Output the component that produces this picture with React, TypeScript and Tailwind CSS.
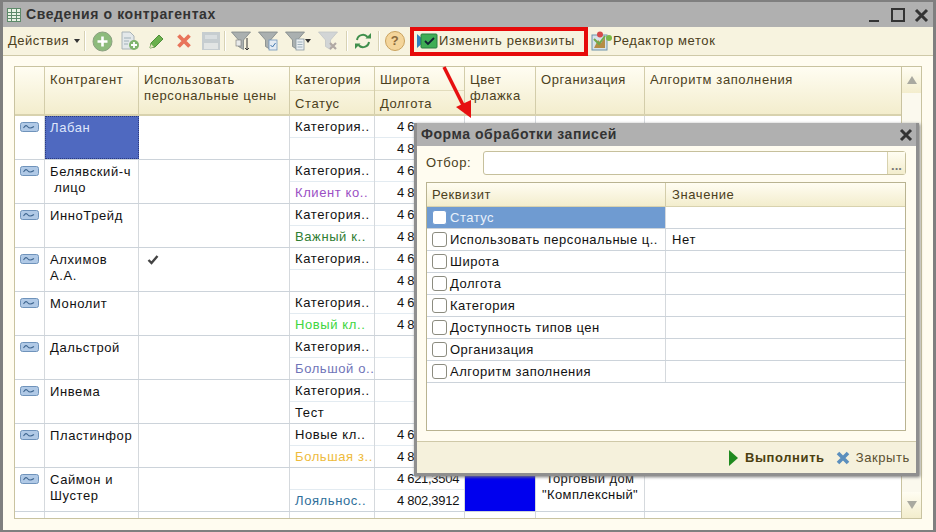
import type { ReactNode } from "react";

const rows = [
  { name: ["Лабан"], selected: true, top: "Категория..", status: "", statusClass: "", lat: "4 6", lon: "4 8" },
  { name: ["Белявский-ч", "\u00a0лицо"], top: "Категория..", status: "Клиент ко..", statusClass: "text-[#9a4fc4]", lat: "4 6", lon: "4 8" },
  { name: ["ИнноТрейд"], top: "Категория..", status: "Важный к..", statusClass: "text-[#2f7d32]", lat: "4 6", lon: "4 8" },
  { name: ["Алхимов", "А.А."], check: true, top: "Категория..", status: "", statusClass: "", lat: "4 6", lon: "4 8" },
  { name: ["Монолит"], top: "Категория..", status: "Новый кл..", statusClass: "text-[#3ed63e]", lat: "4 6", lon: "4 8" },
  { name: ["Дальстрой"], top: "Категория..", status: "Большой о..", statusClass: "text-[#6f74b8]", lat: "", lon: "" },
  { name: ["Инвема"], top: "Категория..", status: "Тест", statusClass: "text-[#111]", lat: "", lon: "" },
  { name: ["Пластинфор"], top: "Новые кл..", status: "Большая з..", statusClass: "text-[#eebb3c]", lat: "4 6", lon: "4 8" },
  { name: ["Саймон и", "Шустер"], top: "", status: "Лояльнос..", statusClass: "text-[#2f6f9a]", lat: "4 621,3504", lon: "4 802,3912", color: true, org: ["Торговый дом", "\"Комплексный\""] },
];

const fields = [
  { label: "Статус", selected: true },
  { label: "Использовать персональные ц..", value: "Нет" },
  { label: "Широта" },
  { label: "Долгота" },
  { label: "Категория" },
  { label: "Доступность типов цен" },
  { label: "Организация" },
  { label: "Алгоритм заполнения" },
];

function Sep() {
  return <div className="mx-0 h-[20px] w-[2px] shrink-0 border-l border-r border-l-[#d8d2b4] border-r-white" />;
}

function Tool({ children, w = "w-[27px]" }: { children: ReactNode; w?: string }) {
  return <div className={`${w} flex h-full shrink-0 items-center justify-center`}>{children}</div>;
}

function Funnel({ dim, children }: { dim?: boolean; children?: ReactNode }) {
  return (
    <svg width="20" height="20" viewBox="0 0 20 20">
      <path d="M0.500 1h19l-7 8v9.500l-5-3V9z" fill={dim ? "#d2d5d6" : "#aab0b0"} stroke={dim ? "#c2c5c6" : "#7d8586"} strokeWidth="0.800" />
      {children}
    </svg>
  );
}

function RowIcon() {
  return (
    <svg width="19" height="10" viewBox="0 0 19 10">
      <rect x="0.500" y="0.500" width="18" height="9" rx="2" fill="#b0c9e6" stroke="#6f93bb" />
      <path d="M3.500 6c2-3 3-3 4.500-1s3 1.500 6-.5" fill="none" stroke="#3f6690" strokeWidth="1.100" />
    </svg>
  );
}

function Toolbar() {
  return (
    <div className="flex h-[29px] shrink-0 items-center border-b border-[#cfc9a8] bg-[#f7f3df] pl-[5px] text-[#4b4020]">
      <span className="w-[66px] shrink-0 tracking-[0.5px]">Действия</span>
      <span className="mr-[4px] h-0 w-0 border-x-[3px] border-t-[4px] border-x-transparent border-t-[#333]" />
      <Sep />
      <div className="w-[3px]" />
      <Tool>
        <svg width="21" height="21" viewBox="0 0 21 21">
          <circle cx="10.500" cy="10.500" r="9.500" fill="#8dbb7c" stroke="#8a9f80" />
          <path d="M10.500 5.500v10M5.500 10.500h10" stroke="#fff" strokeWidth="2.600" />
        </svg>
      </Tool>
      <Tool>
        <svg width="20" height="20" viewBox="0 0 20 20">
          <path d="M2 1h8l4 4v13H2z" fill="#e3e8ea" stroke="#a8b2b6" />
          <path d="M4 7h7M4 10h5M4 13h4" stroke="#9fb0b8" />
          <circle cx="14" cy="14" r="5" fill="#7fb46c" />
          <path d="M14 11v6M11 14h6" stroke="#fff" strokeWidth="1.800" />
        </svg>
      </Tool>
      <Tool>
        <svg width="18" height="18" viewBox="0 0 18 18">
          <path d="M2 16l1-5 8-8 4 4-8 8z" fill="#6ab04c" stroke="#4f8f3a" />
          <path d="M2 16l1-4 3 3z" fill="#e8e4c0" />
        </svg>
      </Tool>
      <Tool>
        <svg width="16" height="16" viewBox="0 0 16 16">
          <path d="M2.500 2.500l11 11M13.500 2.500l-11 11" stroke="#e8745a" strokeWidth="3.800" />
        </svg>
      </Tool>
      <Tool>
        <svg width="20" height="20" viewBox="0 0 20 20">
          <rect x="1" y="1" width="18" height="18" fill="#c6cdd0" />
          <rect x="4" y="4" width="12" height="4" fill="#d9dee0" />
          <rect x="3" y="12" width="14" height="6" fill="#e2e5e4" />
        </svg>
      </Tool>
      <Sep />
      <div className="w-[1px]" />
      <Tool>
        <Funnel>
          <path d="M16 7v12M14 17l2 2 2-2" stroke="#333" fill="none" />
          <rect x="5" y="9" width="5" height="6" fill="#e8eaea" stroke="#777" strokeWidth="0.600" />
        </Funnel>
      </Tool>
      <Tool>
        <Funnel>
          <rect x="11" y="9" width="8" height="10" fill="#e4ebf2" stroke="#6f93bb" strokeWidth="0.800" />
          <path d="M12.500 14l2 2 3-4" stroke="#3f76ad" fill="none" />
        </Funnel>
      </Tool>
      <Tool>
        <Funnel>
          <rect x="11" y="8" width="8" height="11" fill="#e9eef0" stroke="#8c9aa2" strokeWidth="0.800" />
          <path d="M12.500 11h5M12.500 13.500h5M12.500 16h5" stroke="#8ca0ad" strokeWidth="0.800" />
        </Funnel>
      </Tool>
      <span className="ml-[-3px] mr-[6px] h-0 w-0 border-x-[3px] border-t-[4px] border-x-transparent border-t-[#333]" />
      <Tool w="w-[22px]">
        <Funnel dim>
          <path d="M12 12l6 6M18 12l-6 6" stroke="#b0a8a4" strokeWidth="2.200" />
        </Funnel>
      </Tool>
      <div className="w-[7px]" />
      <Sep />
      <Tool w="w-[30px]">
        <svg width="18" height="18" viewBox="0 0 18 18" fill="none">
          <path d="M3 8a6 6 0 0 1 10.500-3" stroke="#3f8f4c" strokeWidth="2" />
          <path d="M15 10a6 6 0 0 1-10.500 3" stroke="#3f8f4c" strokeWidth="2" />
          <path d="M11.500 6.500H17V1z" fill="#3f8f4c" />
          <path d="M6.500 11.500H1V17z" fill="#3f8f4c" />
        </svg>
      </Tool>
      <Sep />
      <Tool w="w-[30px]">
        <div className="flex h-[20px] w-[20px] items-center justify-center rounded-full border border-[#c9a25e] bg-[#f4d59a] text-[13px] font-bold text-[#8a6a3a]">?</div>
      </Tool>
      <div className="w-[1px]" />
      <Sep />
      <div className="flex shrink-0 items-center pl-[4px]">
        <svg width="21" height="16" viewBox="0 0 21 16">
          <path d="M0 1l8 7-8 7z" fill="#2f80c0" />
          <rect x="4" y="1" width="16" height="14" rx="1" fill="#3fae55" stroke="#2a7f40" />
          <path d="M8 8l3 3 6-6" stroke="#123" strokeWidth="1.800" fill="none" />
        </svg>
      </div>
      <span className="ml-[1px] w-[152px] shrink-0">Изменить реквизиты</span>
      <div className="flex shrink-0 items-center">
        <svg width="22" height="20" viewBox="0 0 22 20">
          <rect x="1" y="4" width="15" height="15" fill="#d7e3ea" stroke="#6f93ab" />
          <path d="M3 17l4-8 3 3 4-6v11z" fill="#b58d45" />
          <path d="M3 8l5 5 6-8" stroke="#6faa4c" strokeWidth="2" fill="none" />
          <circle cx="9" cy="3.500" r="3" fill="#d64a4a" />
          <circle cx="18" cy="7" r="3" fill="#7cb845" />
        </svg>
      </div>
      <span className="shrink-0">Редактор меток</span>
    </div>
  );
}

function HeadCell({ className, children }: { className: string; children?: ReactNode }) {
  return <div className={`border-r border-[#d3cdaa] px-[5px] ${className}`}>{children}</div>;
}

function TableHead() {
  return (
    <div className="flex h-[49px] shrink-0 border-b-2 border-[#d8d2ae] bg-linear-to-b from-[#fffdf2] to-[#f3edcd] leading-[16px] text-[#4b4020]">
      <HeadCell className="w-[30px]" />
      <HeadCell className="w-[94px] pt-[5px]">Контрагент</HeadCell>
      <HeadCell className="w-[151px] pt-[5px] whitespace-nowrap">Использовать<br />персональные цены</HeadCell>
      <div className="flex w-[85px] flex-col border-r border-[#d3cdaa]">
        <div className="h-[24px] border-b border-[#e2dcbc] px-[5px] pt-[5px]">Категория</div>
        <div className="px-[5px] pt-[5px]">Статус</div>
      </div>
      <div className="flex w-[90px] flex-col border-r border-[#d3cdaa]">
        <div className="h-[24px] border-b border-[#e2dcbc] px-[5px] pt-[5px]">Широта</div>
        <div className="px-[5px] pt-[5px]">Долгота</div>
      </div>
      <HeadCell className="w-[71px] pt-[5px]">Цвет<br />флажка</HeadCell>
      <HeadCell className="w-[109px] pt-[5px]">Организация</HeadCell>
      <div className="flex-1 px-[5px] pt-[5px]">Алгоритм заполнения</div>
    </div>
  );
}

function TableRow({ row }: { row: (typeof rows)[number] }) {
  return (
    <div className="flex h-[44px] shrink-0 border-b border-[#ccd3da] leading-[16px] text-[#111]">
      <div className="flex w-[30px] justify-center border-r border-[#d5d9dd] pt-[6px]">
        <div className="h-[10px]"><RowIcon /></div>
      </div>
      <div className={`w-[94px] whitespace-nowrap ${row.selected ? "border border-dotted border-[#2a3a80] bg-[#4f69c0] pl-[4px] pt-[3px] text-[#dfe6fb]" : "border-r border-[#d5d9dd] pl-[5px] pt-[4px]"}`}>
        {row.name.map((n) => <div key={n} className="h-[16px] whitespace-pre">{n}</div>)}
      </div>
      <div className="w-[151px] border-r border-[#d5d9dd] pl-[7px] pt-[5px]">
        {row.check && (
          <svg width="12" height="10" viewBox="0 0 12 10" className="ml-[1px] mt-[2px]">
            <path d="M1.500 5l3 3 6-7" fill="none" stroke="#444" strokeWidth="2.400" />
          </svg>
        )}
      </div>
      <div className="flex w-[85px] flex-col whitespace-nowrap border-r border-[#d5d9dd]">
        <div className="h-[22px] border-b border-[#e3ebf1] pl-[5px] pt-[3px]">{row.top}</div>
        <div className={`pl-[5px] pt-[3px] ${row.statusClass}`}>{row.status}</div>
      </div>
      <div className="flex w-[90px] flex-col whitespace-nowrap border-r border-[#d5d9dd] tracking-[-0.3px]">
        <div className="h-[22px] border-b border-[#e3ebf1] pl-[22px] pt-[3px]">{row.lat}</div>
        <div className="pl-[22px] pt-[3px]">{row.lon}</div>
      </div>
      <div className={`w-[71px] border-r border-[#d5d9dd] ${row.color ? "bg-[#0000ee]" : ""}`} />
      <div className="w-[109px] whitespace-nowrap border-r border-[#d5d9dd] pt-[3px] text-center tracking-[0.4px]">
        {row.org?.map((n) => <div key={n} className="h-[16px]">{n}</div>)}
      </div>
      <div className="flex-1" />
    </div>
  );
}

function ScrollArrow({ up }: { up?: boolean }) {
  return (
    <div className="flex h-[26px] items-center justify-center border-[#d8d2ae] bg-linear-to-b from-[#fffdf2] to-[#f3edcd]">
      <span className={`h-0 w-0 border-x-[5px] border-x-transparent ${up ? "border-b-[8px] border-b-[#a9a9a0]" : "border-t-[8px] border-t-[#a9a9a0]"}`} />
    </div>
  );
}

function Dialog() {
  return (
    <div className="absolute left-[414px] top-[123px] flex h-[353px] w-[505px] flex-col border-[3px] border-[#8f8f8f] border-t-0 bg-[#fffcf0] shadow-[1px_1px_3px_#777]">
      <div className="flex h-[23px] shrink-0 items-center justify-between bg-[#b0b0b0] pl-[4px] pr-[3px]">
        <span className="text-[14px] font-bold tracking-[0.55px] text-[#333]">Форма обработки записей</span>
        <svg width="14" height="14" viewBox="0 0 14 14">
          <path d="M2 2l10 10M12 2L2 12" stroke="#333" strokeWidth="3" />
        </svg>
      </div>
      <div className="flex flex-1 flex-col pl-[9px] pr-[10px] pt-[5px]">
        <div className="flex h-[24px] shrink-0 items-center text-[#4b4020]">
          <span className="w-[57px]">Отбор:</span>
          <div className="flex h-[24px] flex-1 justify-end rounded-[3px] border border-[#c6c09c] bg-white">
            <div className="flex w-[18px] items-end justify-center border-l border-[#d8d2ae] bg-linear-to-b from-[#fffdf2] to-[#f3edcd] pb-[3px] text-[13px] font-bold leading-[10px] tracking-normal text-[#777]">...</div>
          </div>
        </div>
        <div className="mt-[7px] flex h-[249px] shrink-0 flex-col border border-[#b9b391] bg-white">
          <div className="flex h-[24px] shrink-0 items-center border-b border-[#d8d2ae] bg-linear-to-b from-[#fffdf2] to-[#f3edcd] text-[#4b4020]">
            <div className="flex h-full w-[239px] items-center border-r border-[#d3cdaa] pl-[5px]">Реквизит</div>
            <div className="pl-[6px]">Значение</div>
          </div>
          {fields.map((f) => (
            <div key={f.label} className="flex h-[22px] shrink-0 items-center border-b border-[#ccd3da] text-[#111]">
              <div className={`flex h-full w-[239px] items-center overflow-hidden border-r border-[#d5d9dd] pl-[5px] ${f.selected ? "bg-[#6f9bd1] text-[#e9f1fb]" : ""}`}>
                <span className={`mr-[3px] h-[15px] w-[15px] shrink-0 rounded-[3px] border ${f.selected ? "border-[#6f9bd1] bg-white" : "border-[#8c8c80] bg-white"}`} />
                <span className="whitespace-nowrap tracking-[0.5px]">{f.label}</span>
              </div>
              <div className="pl-[6px]">{f.value}</div>
            </div>
          ))}
        </div>
      </div>
      <div className="flex h-[32px] shrink-0 items-center justify-end border-t border-[#cfc9a8] bg-[#f5f1dc] pr-[6px]">
        <svg width="9" height="16" viewBox="0 0 9 16" className="mr-[7px]">
          <path d="M0 0l9 8-9 8z" fill="#1f8a1f" />
        </svg>
        <span className="mr-[11px] font-bold text-[#4b3f10]">Выполнить</span>
        <svg width="14" height="14" viewBox="0 0 14 14" className="mr-[6px]">
          <path d="M2 2l10 10M12 2L2 12" stroke="#5b8fbd" strokeWidth="3.600" />
        </svg>
        <span className="text-[#5a5030]">Закрыть</span>
      </div>
    </div>
  );
}

export default function App() {
  return (
    <div className="relative flex h-[532px] w-[936px] flex-col overflow-hidden border-x-[3px] border-y-2 border-[#7f7f7f] bg-[#fffcf0] font-['Liberation_Sans',sans-serif] text-[13px] tracking-[0.6px]">
      <div className="flex h-[25px] shrink-0 items-center bg-[#b0b0b0] pl-[4px] pr-[2px]">
        <svg width="14" height="14" viewBox="0 0 14 14" className="mr-[5px]">
          <rect x="0.500" y="0.500" width="13" height="13" fill="#e9f2e4" stroke="#5e8a6a" />
          <path d="M0 4.500h14M0 7.500h14M0 10.500h14M4.500 0v14M9.500 0v14" stroke="#5e8a6a" />
        </svg>
        <span className="flex-1 text-[14px] font-bold tracking-[0.6px] text-[#333]">Сведения о контрагентах</span>
        <svg width="62" height="16" viewBox="0 0 62 16">
          <path d="M0 14h10" stroke="#333" strokeWidth="2" />
          <rect x="23" y="2" width="12" height="12" fill="none" stroke="#333" strokeWidth="2" />
          <path d="M47 3l11 11M58 3L47 14" stroke="#333" strokeWidth="3" />
        </svg>
      </div>
      <Toolbar />
      <div className="flex min-h-0 flex-1 flex-col px-[11px] pb-[11px] pt-[10px]">
        <div className="flex min-h-0 flex-1 border border-[#c9c3a0] bg-white">
          <div className="flex min-w-0 flex-1 flex-col overflow-hidden">
            <TableHead />
            {rows.map((r) => <TableRow key={r.name[0]} row={r} />)}
            <div className="flex flex-1">
              <div className="w-[30px] border-r border-[#d5d9dd]" />
              <div className="w-[94px] border-r border-[#d5d9dd]" />
              <div className="w-[151px] border-r border-[#d5d9dd]" />
              <div className="w-[85px] border-r border-[#d5d9dd]" />
              <div className="w-[90px] border-r border-[#d5d9dd]" />
              <div className="w-[71px] border-r border-[#d5d9dd]" />
              <div className="w-[109px] border-r border-[#d5d9dd]" />
            </div>
          </div>
          <div className="flex w-[20px] shrink-0 flex-col justify-between border-l border-[#c9c3a0] bg-[#fbf9ee]">
            <ScrollArrow up />
            <ScrollArrow />
          </div>
        </div>
      </div>
      <div className="pointer-events-none absolute left-[407px] top-[25px] h-[29px] w-[178px] border-[4px] border-[#e60a0a]" />
      <svg width="50" height="60" viewBox="0 0 50 60" className="absolute left-[435px] top-[62px]">
        <path d="M6 3l20 40" stroke="#e61010" strokeWidth="3.500" />
        <path d="M33 54L18 43l15-7z" fill="#e61010" />
      </svg>
      <div className="absolute left-[-3px] top-[-2px] h-0 w-0">
        <Dialog />
      </div>
    </div>
  );
}
